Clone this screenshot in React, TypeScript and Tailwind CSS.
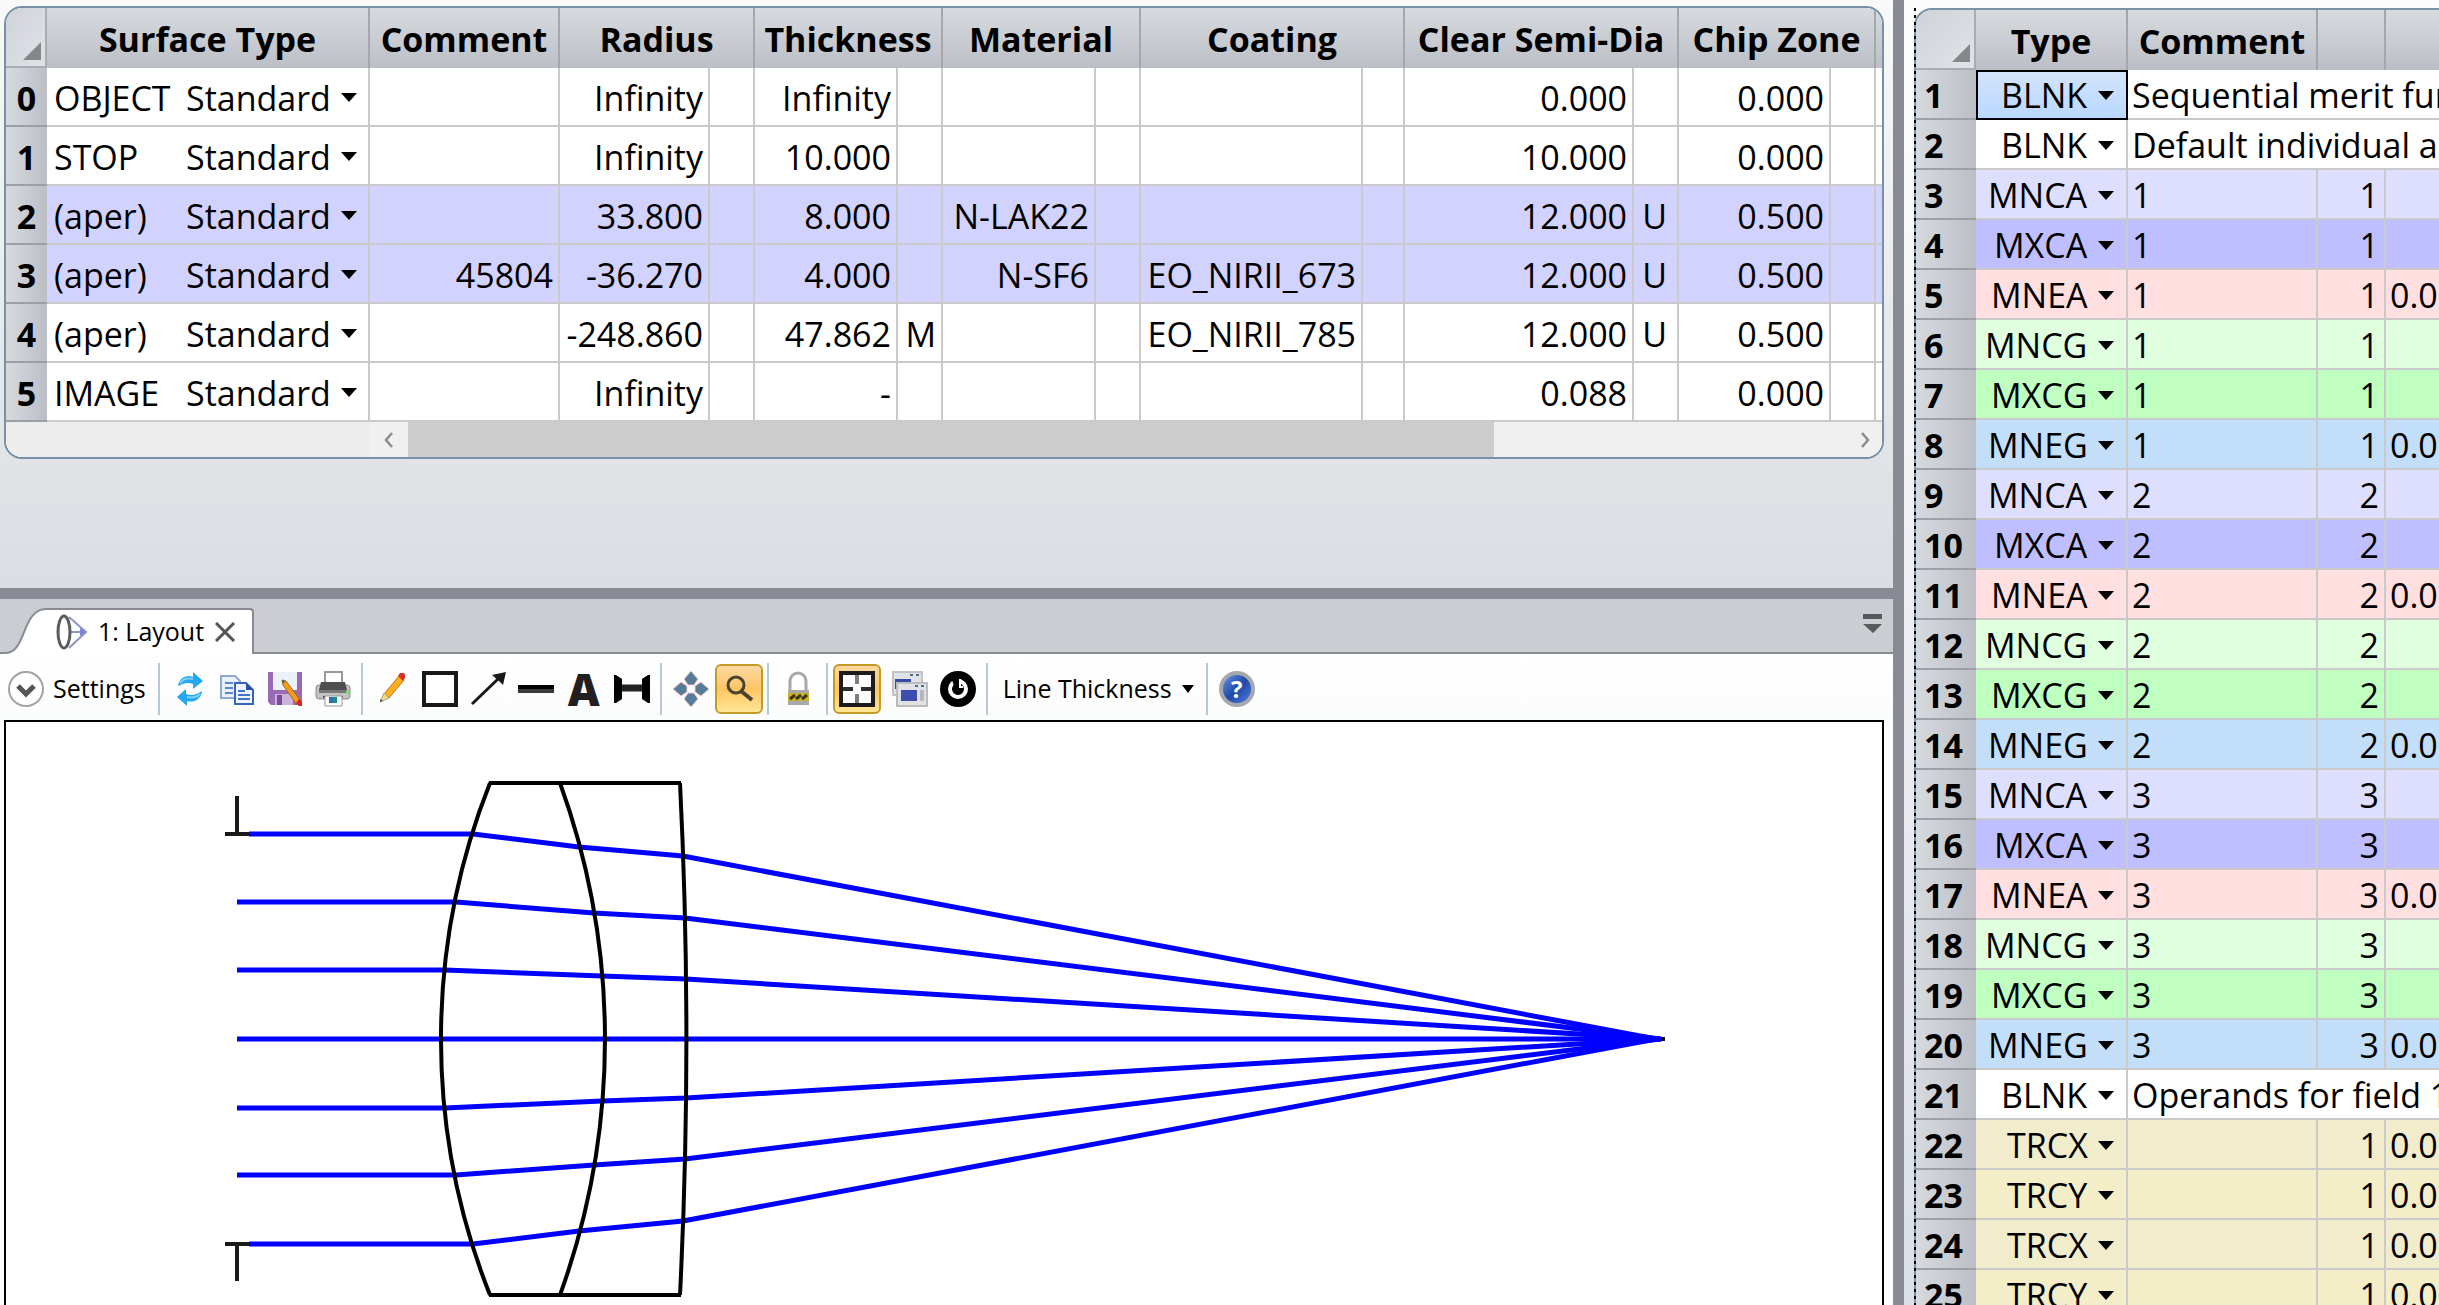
import { useState } from "react";
import type { ReactNode } from "react";
import clsx from "clsx";

interface Surface {
  label: string;
  comment?: string;
  radius: string;
  thickness: string;
  thicknessSolve?: string;
  material?: string;
  coating?: string;
  semiDia: string;
  semiDiaSolve?: string;
  chipZone: string;
  highlighted?: boolean;
}

const surfaces: Surface[] = [
  { label: "OBJECT", radius: "Infinity", thickness: "Infinity", semiDia: "0.000", chipZone: "0.000" },
  { label: "STOP", radius: "Infinity", thickness: "10.000", semiDia: "10.000", chipZone: "0.000" },
  {
    label: "(aper)",
    radius: "33.800",
    thickness: "8.000",
    material: "N-LAK22",
    semiDia: "12.000",
    semiDiaSolve: "U",
    chipZone: "0.500",
    highlighted: true,
  },
  {
    label: "(aper)",
    comment: "45804",
    radius: "-36.270",
    thickness: "4.000",
    material: "N-SF6",
    coating: "EO_NIRII_673",
    semiDia: "12.000",
    semiDiaSolve: "U",
    chipZone: "0.500",
    highlighted: true,
  },
  {
    label: "(aper)",
    radius: "-248.860",
    thickness: "47.862",
    thicknessSolve: "M",
    coating: "EO_NIRII_785",
    semiDia: "12.000",
    semiDiaSolve: "U",
    chipZone: "0.500",
  },
  { label: "IMAGE", radius: "Infinity", thickness: "-", semiDia: "0.088", chipZone: "0.000" },
];

interface Operand {
  type: string;
  comment: string;
  surf?: string;
  value?: string;
}

const boundaryGroup = (n: string): Operand[] => [
  { type: "MNCA", comment: n, surf: n },
  { type: "MXCA", comment: n, surf: n },
  { type: "MNEA", comment: n, surf: n, value: "0.000" },
  { type: "MNCG", comment: n, surf: n },
  { type: "MXCG", comment: n, surf: n },
  { type: "MNEG", comment: n, surf: n, value: "0.000" },
];

const operands: Operand[] = [
  { type: "BLNK", comment: "Sequential merit function" },
  { type: "BLNK", comment: "Default individual air and glass" },
  ...boundaryGroup("1"),
  ...boundaryGroup("2"),
  ...boundaryGroup("3"),
  { type: "BLNK", comment: "Operands for field 1." },
  { type: "TRCX", comment: "", surf: "1", value: "0.000" },
  { type: "TRCY", comment: "", surf: "1", value: "0.000" },
  { type: "TRCX", comment: "", surf: "1", value: "0.000" },
  { type: "TRCY", comment: "", surf: "1", value: "0.000" },
];

const operandColors: Record<string, string> = {
  BLNK: "bg-white",
  MNCA: "bg-[#dedeff]",
  MXCA: "bg-[#bfbfff]",
  MNEA: "bg-[#ffdfdf]",
  MNCG: "bg-[#dfffdf]",
  MXCG: "bg-[#bfffbf]",
  MNEG: "bg-[#c2def9]",
  TRCX: "bg-[#f0eccc]",
  TRCY: "bg-[#f3edc8]",
};

const headClass =
  "border-r-2 border-[#a4a7ad] bg-linear-to-b from-[#d7dbdf] to-[#bcbec6] px-0 pt-0.5 pb-0 text-center font-bold";
const rowHeadClass =
  "border-b-2 border-[#9c9fa5] bg-linear-to-r from-[#d6dade] to-[#bcbec6] px-0 pt-0.5 pb-0 font-bold";
const cellClass = "border-r-2 border-b-2 border-[#cacaca] px-[5px] pt-0.5 pb-0 text-right";

function CornerCell() {
  return (
    <th
      aria-label="Select all"
      className="border-r-2 border-b-2 border-[#a9acb1] bg-linear-to-br from-[#cfd3d8] to-[#e0e2e6] p-0"
    >
      <svg viewBox="0 0 18 18" className="mt-7 mr-1 ml-auto size-[18px]">
        <path d="M18 0v18H0z" fill="#85878b" />
      </svg>
    </th>
  );
}

function Caret() {
  return (
    <svg viewBox="0 0 16 9" className="pointer-events-none w-4 shrink-0">
      <path d="M0 0h16L8 9z" fill="#000" />
    </svg>
  );
}

function CellSelect({ label, value }: { label: string; value: string }) {
  return (
    <span className="inline-flex items-center gap-2.5">
      <select aria-label={label} defaultValue={value} className="appearance-none bg-transparent">
        <option>{value}</option>
      </select>
      <Caret />
    </span>
  );
}

function LensDataEditor() {
  return (
    <div className="mr-[9px] ml-1 overflow-hidden rounded-[18px] border-2 border-[#7691a8] bg-white">
      <table className="w-full table-fixed border-separate border-spacing-0 text-[34px] leading-[46px] whitespace-nowrap">
        <colgroup>
          <col className="w-[41px]" />
          <col className="w-[323px]" />
          <col className="w-[190px]" />
          <col className="w-[150px]" />
          <col className="w-[45px]" />
          <col className="w-[143px]" />
          <col className="w-[45px]" />
          <col className="w-[153px]" />
          <col className="w-[45px]" />
          <col className="w-[222px]" />
          <col className="w-[42px]" />
          <col className="w-[229px]" />
          <col className="w-[45px]" />
          <col className="w-[152px]" />
          <col className="w-[45px]" />
          <col />
        </colgroup>
        <thead>
          <tr className="h-[60px]">
            <CornerCell />
            <th className={headClass}>Surface Type</th>
            <th className={headClass}>Comment</th>
            <th className={headClass} colSpan={2}>Radius</th>
            <th className={headClass} colSpan={2}>Thickness</th>
            <th className={headClass} colSpan={2}>Material</th>
            <th className={headClass} colSpan={2}>Coating</th>
            <th className={headClass} colSpan={2}>Clear Semi-Dia</th>
            <th className={headClass} colSpan={2}>Chip Zone</th>
            <th className="bg-linear-to-b from-[#d7dbdf] to-[#bcbec6] p-0" />
          </tr>
        </thead>
        <tbody>
          {surfaces.map((s, i) => (
            <tr key={i} className={clsx("h-[59px]", s.highlighted && "bg-[#d2d2ff]")}>
              <th className={rowHeadClass}>{i}</th>
              <td className={cellClass}>
                <div className="flex items-center justify-between pr-1.5 pl-[2px]">
                  <span>{s.label}</span>
                  <CellSelect label={`Surface ${i} type`} value="Standard" />
                </div>
              </td>
              <td className={cellClass}>{s.comment}</td>
              <td className={cellClass}>{s.radius}</td>
              <td className={cellClass} />
              <td className={cellClass}>{s.thickness}</td>
              <td className={cellClass}>{s.thicknessSolve}</td>
              <td className={cellClass}>{s.material}</td>
              <td className={cellClass} />
              <td className={cellClass}>{s.coating}</td>
              <td className={cellClass} />
              <td className={cellClass}>{s.semiDia}</td>
              <td className={clsx(cellClass, "pr-2.5")}>{s.semiDiaSolve}</td>
              <td className={cellClass}>{s.chipZone}</td>
              <td className={cellClass} />
              <td className="border-b-2 border-[#cacaca] p-0" />
            </tr>
          ))}
        </tbody>
      </table>
      <div className="flex h-[35px] bg-[#ededed] pl-[364px]">
        <button aria-label="Scroll left" className="flex w-[38px] items-center justify-center bg-[#f0f0f0]">
          <svg viewBox="0 0 10 16" className="h-4 w-2.5" fill="none" stroke="#8c8c8c" strokeWidth="2.5">
            <path d="M8 1 2 8l6 7" />
          </svg>
        </button>
        <div className="flex-1 bg-[#f0f0f0]">
          <div className="h-full w-[75.4%] bg-[#cdcdcd]" />
        </div>
        <button aria-label="Scroll right" className="flex w-[34px] items-center justify-center bg-[#f0f0f0]">
          <svg viewBox="0 0 10 16" className="h-4 w-2.5" fill="none" stroke="#8c8c8c" strokeWidth="2.5">
            <path d="m2 1 6 7-6 7" />
          </svg>
        </button>
      </div>
    </div>
  );
}

function MeritFunctionEditor() {
  const [selected, setSelected] = useState(0);

  return (
    <div className="relative ml-2.5 overflow-hidden">
      <div className="overflow-hidden rounded-tl-[18px] border-t-2 border-l-2 border-[#7691a8]">
        <table className="w-full table-fixed border-separate border-spacing-0 text-[34px] leading-[46px] whitespace-nowrap">
          <colgroup>
            <col className="w-[60px]" />
            <col className="w-[152px]" />
            <col className="w-[190px]" />
            <col className="w-[68px]" />
            <col />
          </colgroup>
          <thead>
            <tr className="h-[60px]">
              <CornerCell />
              <th className={headClass}>Type</th>
              <th className={headClass}>Comment</th>
              <th className={headClass} />
              <th className="bg-linear-to-b from-[#d7dbdf] to-[#bcbec6] p-0" />
            </tr>
          </thead>
          <tbody>
            {operands.map((op, i) => (
              <tr key={i} className={clsx("h-[50px]", operandColors[op.type])}>
                <th className={clsx(rowHeadClass, "pl-2 text-left")}>{i + 1}</th>
                <td
                  onClick={() => setSelected(i)}
                  className={
                    selected === i
                      ? "border-2 border-black bg-linear-to-b from-[#d3e3fb] to-[#b9d8fe] py-0 pr-3 text-right"
                      : "border-r-2 border-b-2 border-[#cacaca] pt-0.5 pr-3 pb-0 text-right"
                  }
                >
                  <CellSelect label={`Operand ${i + 1} type`} value={op.type} />
                </td>
                {op.surf ? (
                  <>
                    <td className="border-r-2 border-b-2 border-[#cacaca] px-1 pt-0.5 pb-0">{op.comment}</td>
                    <td className={cellClass}>{op.surf}</td>
                    <td className="overflow-hidden border-b-2 border-[#cacaca] px-1 pt-0.5 pb-0">{op.value}</td>
                  </>
                ) : (
                  <td colSpan={3} className="overflow-hidden border-b-2 border-[#cacaca] px-1 pt-0.5 pb-0">
                    {op.comment}
                  </td>
                )}
              </tr>
            ))}
          </tbody>
        </table>
      </div>
      <FocusLine />
    </div>
  );
}

// dotted keyboard-focus line on the left edge of the active editor
function FocusLine() {
  return (
    <div className="absolute inset-y-0 left-0 w-[2px] bg-[repeating-linear-gradient(to_bottom,#000_0_3px,transparent_3px_7px)]" />
  );
}

function ToolButton({ label, active, children }: { label: string; active?: boolean; children: ReactNode }) {
  return (
    <button
      aria-label={label}
      title={label}
      className={clsx(
        "flex h-[50px] w-12 shrink-0 items-center justify-center rounded-md",
        active &&
          "border-2 border-[#c29b29] bg-linear-to-b from-[#fcd9a0] via-[#ffc562] to-[#ffe695]"
      )}
    >
      {children}
    </button>
  );
}

function Icon({ children }: { children: ReactNode }) {
  return (
    <svg viewBox="0 0 36 36" className="size-9 shrink-0" fill="none">
      {children}
    </svg>
  );
}

function Separator() {
  return <div className="mr-[5px] ml-1 h-[52px] w-[2px] shrink-0 bg-[#b8c8db]" />;
}

function Toolbar() {
  return (
    <div className="flex h-[66px] items-center bg-linear-to-b from-white to-[#fbfcfc] pt-1 pl-2 text-[25px]">
      <button className="flex items-center gap-[9px] pr-2">
        <Icon>
          <circle cx="18" cy="18" r="17" fill="#fff" stroke="#a3a3a3" strokeWidth="2" />
          <path d="m10 15 8 8 8-8" stroke="#555" strokeWidth="5" />
        </Icon>
        Settings
      </button>
      <Separator />
      <ToolButton label="Update">
        <Icon>
          <path d="M7 15C8 6 17 3 22 6V1l10 9-10 8v-5c-5-2-9-1-15 2z" fill="#22a7f0" />
          <path d="M31 20c-1 9-9 12-15 10v5L6 26l9-8v5c6 2 10 1 16-3z" fill="#22a7f0" />
          <path d="M9 12c3-4 8-5 13-4M29 23c-3 3-8 4-13 3" stroke="#7ed0fb" strokeWidth="2" />
        </Icon>
      </ToolButton>
      <ToolButton label="Copy">
        <Icon>
          <path d="M2 5h14l5 5v17H2z" fill="#e8f1fc" stroke="#8fa9cf" strokeWidth="2" />
          <path d="M6 12h8M6 17h8M6 22h8" stroke="#5b86c8" strokeWidth="2" />
          <path d="M16 12h11l7 7v14H16z" fill="#eef5ff" stroke="#3565bf" strokeWidth="2" />
          <path d="M27 12v7h7z" fill="#2450a8" />
          <path d="M19 20h7M19 24h12M19 28h12" stroke="#3f73cd" strokeWidth="2" />
        </Icon>
      </ToolButton>
      <ToolButton label="Save as">
        <Icon>
          <path d="M1 1h34v33H4l-3-3z" fill="#9a6bb5" />
          <path d="M6 1h24v18H6z" fill="#e9f2f8" />
          <path d="M8 23h18v11H8z" fill="#c9b3d8" />
          <path d="M10 24h5v10h-5z" fill="#7b4a99" />
          <path d="m15 9 4 1 15 20-4 4L16 14z" fill="#f59a1c" stroke="#a8681a" />
          <path d="m32 28 3 3v4h-3l-3-3z" fill="#d6232a" />
          <path d="m15 9 3 1-2 3z" fill="#555" />
        </Icon>
      </ToolButton>
      <ToolButton label="Print">
        <Icon>
          <path d="M10 1h17v13H10z" fill="#fff" stroke="#999" strokeWidth="2" />
          <rect x="1" y="14" width="34" height="14" rx="3" fill="#c2c2c2" stroke="#8b8b8b" />
          <path d="M6 11h24l2 8H4z" fill="#4e4e50" />
          <path d="M4 19h28v3H4z" fill="#777" />
          <path d="M8 25h20v2H8z" fill="#555" />
          <path d="M10 25h17v10H10z" fill="#fff" stroke="#999" />
          <path d="M14 26h4v6h-4z" fill="#2c6fb3" />
          <path d="M18 26h4v6h-4z" fill="#1f8f86" />
          <path d="M31 20h3v3h-3z" fill="#6ee36e" />
        </Icon>
      </ToolButton>
      <Separator />
      <ToolButton label="Draw">
        <Icon>
          <path d="M25 5 30 9 15 27l-5-4z" fill="#ffb01f" stroke="#bd7417" />
          <path d="m10 22 5 5-9 4z" fill="#ecd98a" stroke="#a8a070" />
          <path d="m6 28 3 2-3 1z" fill="#555" />
          <path d="m24 5 2-3h4l1 2v3l-2 3z" fill="#d93025" />
        </Icon>
      </ToolButton>
      <ToolButton label="Rectangle">
        <Icon>
          <rect x="2" y="2" width="32" height="32" fill="#fff" stroke="#1b171a" strokeWidth="4" />
        </Icon>
      </ToolButton>
      <ToolButton label="Arrow">
        <Icon>
          <path d="M2 33 28 8" stroke="#1b171a" strokeWidth="3" />
          <path d="m22 4 14-3-3 13-4-4z" fill="#1b171a" />
        </Icon>
      </ToolButton>
      <ToolButton label="Line">
        <Icon>
          <path d="M0 18h36" stroke="#000" strokeWidth="8" />
          <path d="M0 20h36" stroke="#3a3a3a" strokeWidth="4" />
        </Icon>
      </ToolButton>
      <ToolButton label="Text">
        <span className="text-[44px] leading-9 font-extrabold text-[#231f20]">A</span>
      </ToolButton>
      <ToolButton label="Measure">
        <Icon>
          <path d="M0 4h2l6 4v20l-6 4H0zM36 4h-2l-6 4v20l6 4h2z" fill="#000" />
          <path d="M8 17h20" stroke="#222" strokeWidth="7" />
        </Icon>
      </ToolButton>
      <Separator />
      <ToolButton label="Pan">
        <Icon>
          <path
            d="m18 0 7 8-2 3-2 3h-6l-2-3-2-3zM18 36l7-8-2-3-2-3h-6l-2 3-2 3zM0 18l8-7 3 2 3 2v6l-3 2-3 2zM36 18l-8-7-3 2-3 2v6l3 2 3 2z"
            fill="#557c99"
            stroke="#f0c9cc"
          />
        </Icon>
      </ToolButton>
      <ToolButton label="Zoom" active>
        <Icon>
          <circle cx="15" cy="14" r="8" stroke="#4b4234" strokeWidth="3" />
          <path d="m20 20 11 9" stroke="#4b4234" strokeWidth="4" />
        </Icon>
      </ToolButton>
      <Separator />
      <ToolButton label="Lock">
        <Icon>
          <path d="M10 20v-9c0-12 16-12 16 0v9" stroke="#a8a8a8" strokeWidth="3" />
          <path d="M8 19h21v15H8z" fill="#a9a9a9" />
          <path d="M8 22h21v8H8z" fill="#c9b32c" />
          <path d="m10 28 5-4M16 28l5-4M22 28l5-4" stroke="#3b3410" strokeWidth="3" />
        </Icon>
      </ToolButton>
      <Separator />
      <ToolButton label="Fit window" active>
        <Icon>
          <rect x="2" y="2" width="32" height="32" fill="#fff" stroke="#1f1b1d" strokeWidth="4" />
          <path d="M4 18h10M22 18h10" stroke="#2d2d2d" strokeWidth="4" />
          <path d="M18 4v9M18 23v9" stroke="#7d7d7d" strokeWidth="4" />
        </Icon>
      </ToolButton>
      <div className="w-[5px]" />
      <ToolButton label="Clone window">
        <Icon>
          <path d="M1 1h29v23H1z" fill="#e1e2e6" stroke="#c1c3c7" strokeWidth="2" />
          <path d="M3 8h16v10H3z" fill="#3949a8" />
          <path d="M7 11h22v7H7z" fill="#eee" />
          <path d="M5 12h30v23H5z" fill="#e1e2e6" stroke="#b9bbbf" strokeWidth="2" />
          <path d="M9 19h16v11H9z" fill="#3d4db0" />
          <path d="M28 19h4v11h-4z" fill="#b5b7bb" />
          <path d="M18 4h3M24 4h3M23 15h3M29 15h3" stroke="#4d6e8c" strokeWidth="2" />
        </Icon>
      </ToolButton>
      <ToolButton label="Reset">
        <Icon>
          <circle cx="18" cy="18" r="18" fill="#000" />
          <circle cx="18" cy="18" r="8" stroke="#fff" strokeWidth="4" />
          <path d="M11 6h7v9h-4z" fill="#000" />
          <path d="M18 8v11" stroke="#000" strokeWidth="4" />
          <path d="M12 17h12l-6 7z" fill="#000" />
          <path d="M20 8v8h3" stroke="#fff" strokeWidth="2" />
        </Icon>
      </ToolButton>
      <Separator />
      <button className="flex items-center gap-2.5 pr-2 pl-2.5">
        Line Thickness
        <svg viewBox="0 0 12 8" className="w-3">
          <path d="M0 0h12L6 8z" fill="#000" />
        </svg>
      </button>
      <Separator />
      <ToolButton label="Help">
        <span className="flex size-9 items-center justify-center rounded-full border-4 border-[#a5a8ad] bg-linear-to-br from-[#6d93e4] via-[#1f49a8] to-[#4d7de0] text-2xl leading-6 font-bold text-white">
          ?
        </span>
      </ToolButton>
    </div>
  );
}

// parallel fan traced through the three doublet surfaces to the image plane
const rays = [
  "243,112 467,112 573,125 677,134 1650,317",
  "231,180 450,180 588,191 679,196 1654,317",
  "231,248 439,248 596,254 680,257 1654,317",
  "231,317 1656,317",
  "231,386 439,386 596,379 680,376 1654,317",
  "231,453 450,453 588,443 679,437 1654,317",
  "243,522 467,522 573,509 677,499 1650,317",
];

function LayoutPlot() {
  return (
    <svg
      viewBox="0 0 1876 583"
      preserveAspectRatio="xMinYMin slice"
      className="block h-full w-full"
      role="img"
      aria-label="Lens layout"
      fill="none"
      strokeWidth="4"
    >
      {rays.map((points) => (
        <polyline key={points} points={points} stroke="#0000ff" strokeWidth="5" />
      ))}
      <g stroke="#000">
        <path d="M484 61A693 693 0 0 0 484 573" />
        <path d="M554 61A751 751 0 0 1 554 573" />
        <path d="M674 61A5120 5120 0 0 1 674 573" />
        <path d="M483 61H675M483 573H675" />
        <path d="M219 112h24M231 112V74M219 522h24M231 522v37" stroke="#1a1a1a" />
        <path d="M1655 317h4" stroke="#111" />
      </g>
    </svg>
  );
}

function LayoutWindow() {
  return (
    <div className="flex min-h-0 flex-1 flex-col bg-[#fcfdfd]">
      <div className="flex h-[55px] shrink-0 items-end bg-[#cacdd2]">
        <svg viewBox="0 0 46 46" className="size-[46px]">
          <path d="M0 45h6C26 45 22 1 46 1v45H0z" fill="#fff" />
          <path d="M0 45h6C26 45 22 1 46 1" fill="none" stroke="#888b94" strokeWidth="2" />
        </svg>
        <div className="flex h-[46px] items-center gap-2.5 rounded-tr border-t-2 border-r-2 border-[#888b94] bg-white pr-4 pl-2.5 text-[25px]">
          <svg viewBox="0 0 32 36" className="h-9 w-8" fill="none">
            <path d="M13 3 30 18 13 34M14 18h16" stroke="#8b93cf" strokeWidth="2" />
            <ellipse cx="8" cy="18" rx="6" ry="16" fill="#fff" stroke="#5c5c5c" strokeWidth="3" />
            <path d="m24 14 6 4-6 4z" fill="#7d86cc" />
          </svg>
          <span>1: Layout</span>
          <button aria-label="Close layout">
            <svg viewBox="0 0 22 20" className="h-5 w-[22px]" fill="none" stroke="#555" strokeWidth="3">
              <path d="m2 1 18 18M20 1 2 19" />
            </svg>
          </button>
        </div>
        <div className="flex h-[46px] flex-1 items-center justify-end border-b-2 border-[#888b94] pr-[11px]">
          <button aria-label="Window list">
            <svg viewBox="0 0 19 20" className="mb-3 h-5 w-[19px]" fill="#58595c">
              <path d="M0 0h19v5H0zM0 10h19l-9 9z" />
            </svg>
          </button>
        </div>
      </div>
      <Toolbar />
      <div className="mr-[9px] ml-1 min-h-0 flex-1 border-2 border-b-0 border-black bg-white">
        <LayoutPlot />
      </div>
    </div>
  );
}

export default function App() {
  return (
    <div className="flex h-screen w-full overflow-hidden bg-[#888b94] font-['Open_Sans',sans-serif] text-black">
      <div className="flex min-w-0 flex-1 flex-col">
        <div className="bg-linear-to-b from-[#f9f9f9] to-[#dadde2] pt-1.5 pb-[129px]">
          <LensDataEditor />
        </div>
        <div className="h-[11px] shrink-0" />
        <LayoutWindow />
      </div>
      <div className="w-[11px] shrink-0" />
      <div className="w-[535px] shrink-0 overflow-hidden bg-linear-to-b from-[#fdfdfd] to-[#dcdfe6] pt-2">
        <MeritFunctionEditor />
      </div>
    </div>
  );
}
